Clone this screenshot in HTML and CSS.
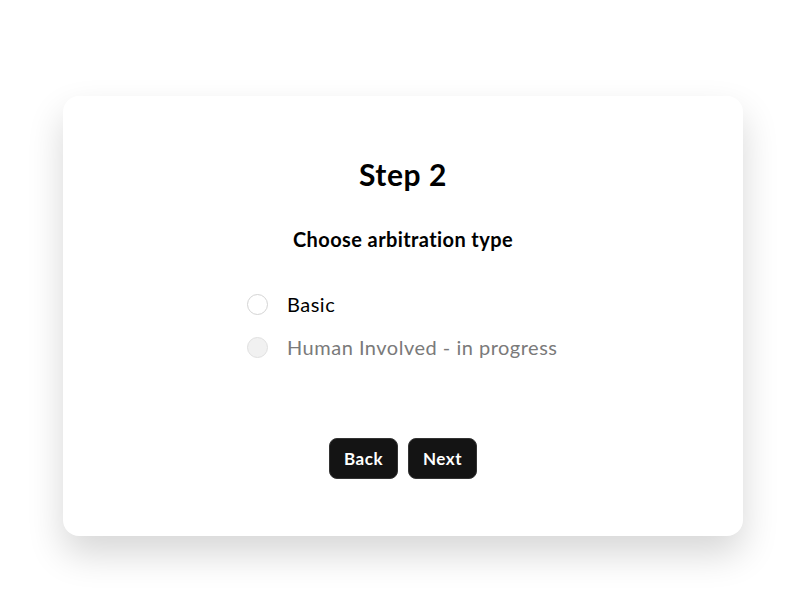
FILE: index.html
```html
<!DOCTYPE html>
<html>
<head>
<meta charset="utf-8">
<link rel="stylesheet" href="styles.css">
</head>
<body>
<div class="card">
  <h1 class="title">Step 2</h1>
  <h2 class="subtitle">Choose arbitration type</h2>
  <div class="options">
    <label class="option"><span class="radio"></span><span class="label">Basic</span></label>
    <label class="option disabled"><span class="radio"></span><span class="label">Human Involved - in progress</span></label>
  </div>
  <div class="actions">
    <button class="btn">Back</button>
    <button class="btn">Next</button>
  </div>
</div>
</body>
</html>
```
FILE: styles.css
```css
html, body { margin: 0; padding: 0; background: #fff; }
body { font-family: "Lato", "Noto Sans", sans-serif; color: #000; padding: 96px 0 0 63px; min-height: 100vh; box-sizing: border-box; }
.card {
  box-sizing: border-box;
  width: 680px;
  height: 440px;
  background: #fff;
  border-radius: 16px;
  box-shadow: 0 18px 36px rgba(0,0,0,0.16);
  display: flex;
  flex-direction: column;
  align-items: center;
  padding-top: 56px;
}
.title { margin: 0; font-size: 30px; font-weight: 700; line-height: 44px; letter-spacing: 0.6px; }
.subtitle { margin: 30px 0 0; font-size: 20px; font-weight: 700; line-height: 26px; letter-spacing: 0.4px; }
.options { margin-top: 40px; display: flex; flex-direction: column; gap: 19px; align-self: flex-start; margin-left: 184px; }
.option { display: flex; align-items: center; gap: 19px; font-size: 20px; line-height: 24px; letter-spacing: 0.5px; }
.radio { width: 19px; height: 19px; border: 1px solid #d4d4d4; border-radius: 50%; background: #fff; }
.option.disabled .radio { background: #f1f1f1; border-color: #e0e0e0; }
.option.disabled .label { color: #7a7a7a; }
.actions { margin-top: 79px; display: flex; gap: 10px; }
.btn {
  font-family: inherit; font-size: 17px; font-weight: 700; color: #fff; letter-spacing: 0.5px;
  background: #141414; border: 1px solid #333; border-radius: 8px;
  height: 41px; padding: 0 14px;
}
```
